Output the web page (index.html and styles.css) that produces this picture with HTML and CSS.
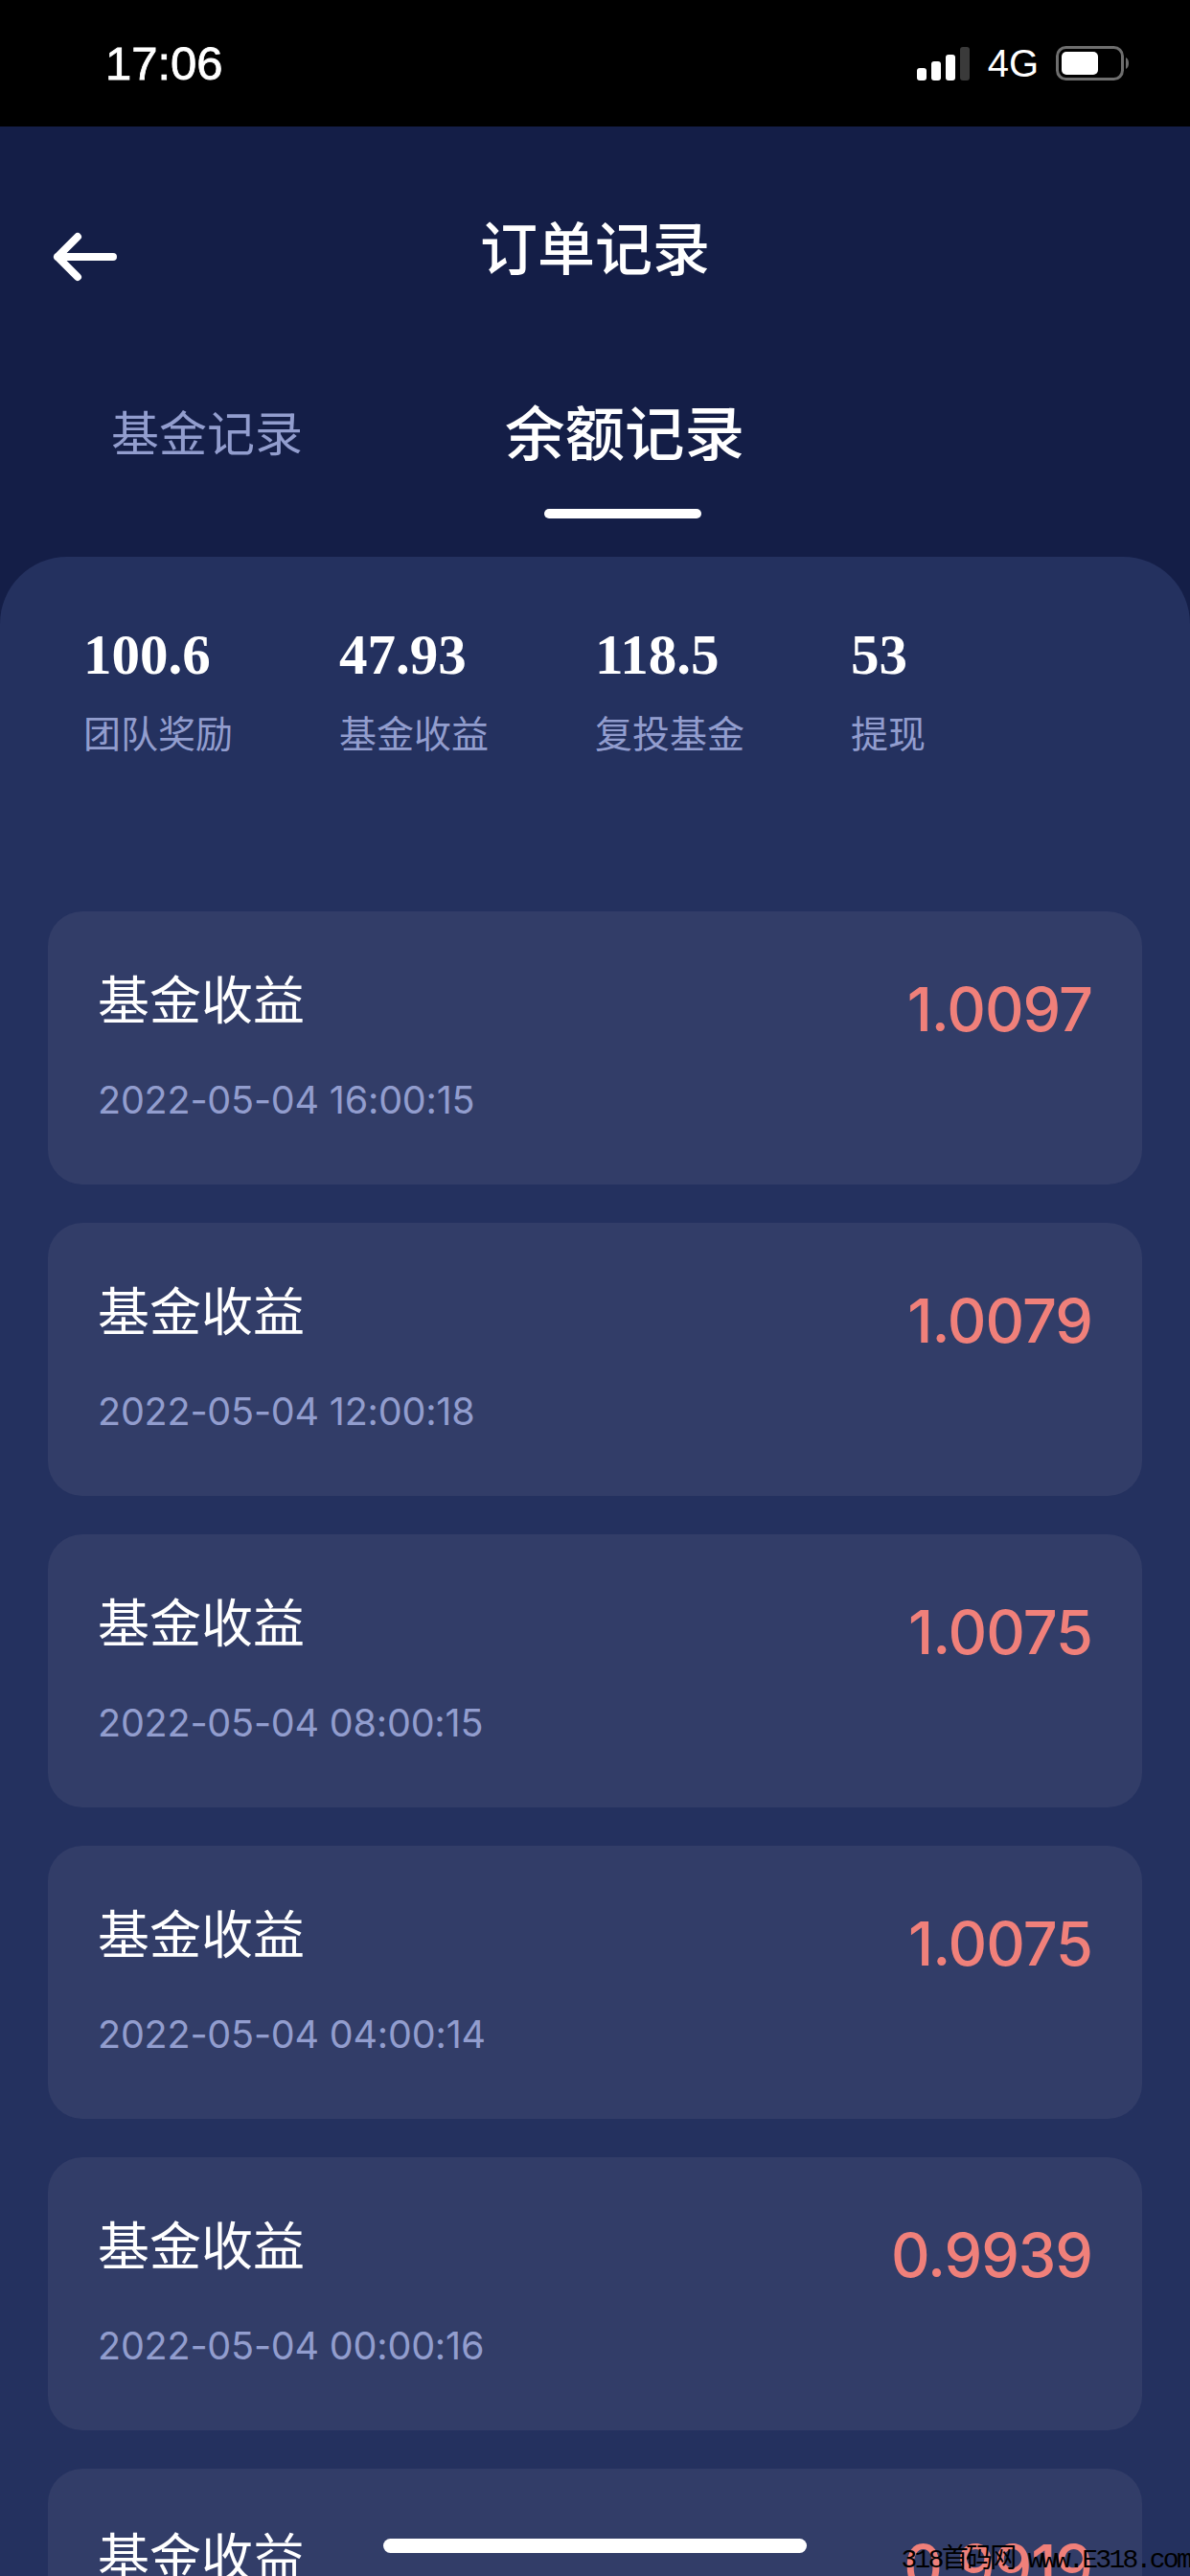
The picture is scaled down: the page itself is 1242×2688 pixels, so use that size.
FILE: index.html
```html
<!DOCTYPE html>
<html lang="en">
<head>
  <title>订单记录</title>
  <meta charset="UTF-8">
  <meta name="viewport" content="width=device-width, initial-scale=1">
  <link rel="stylesheet" href="styles.css">
</head>
<body>
  <div class="status-bar">
    <span class="clock">17:06</span>
    <div class="status-icons">
      <div class="signal">
        <span class="bar bar-1"></span>
        <span class="bar bar-2"></span>
        <span class="bar bar-3"></span>
        <span class="bar bar-4"></span>
      </div>
      <span class="network">4G</span>
      <svg class="battery" width="76" height="36" viewBox="0 0 76 36">
        <rect x="1.5" y="1.5" width="68" height="33" rx="9" fill="none" stroke="#6e6e6e" stroke-width="3"/>
        <rect x="6" y="6" width="38" height="24" rx="5" fill="#fff"/>
        <path d="M73 12 C75 13 76 15 76 18 C76 21 75 23 73 24 Z" fill="#6e6e6e"/>
      </svg>
    </div>
  </div>

  <div class="top-bar">
    <svg class="back" width="74" height="58" viewBox="0 0 74 58">
      <path d="M67 32 H9 M30 11 L9 32 L30 53" fill="none" stroke="#fff" stroke-width="8" stroke-linecap="round" stroke-linejoin="round"/>
    </svg>
    <h1 class="page-title">订单记录</h1>
  </div>

  <div class="tabs">
    <span class="tab">基金记录</span>
    <span class="tab tab-active">余额记录</span>
  </div>

  <div class="panel">
    <div class="stats">
      <div class="stat"><b>100.6</b><span>团队奖励</span></div>
      <div class="stat"><b>47.93</b><span>基金收益</span></div>
      <div class="stat"><b>118.5</b><span>复投基金</span></div>
      <div class="stat"><b>53</b><span>提现</span></div>
    </div>

    <div class="list">
      <div class="card">
        <div class="card-info"><p class="card-title">基金收益</p><p class="card-date">2022-05-04 16:00:15</p></div>
        <span class="card-value">1.0097</span>
      </div>
      <div class="card">
        <div class="card-info"><p class="card-title">基金收益</p><p class="card-date">2022-05-04 12:00:18</p></div>
        <span class="card-value">1.0079</span>
      </div>
      <div class="card">
        <div class="card-info"><p class="card-title">基金收益</p><p class="card-date">2022-05-04 08:00:15</p></div>
        <span class="card-value">1.0075</span>
      </div>
      <div class="card">
        <div class="card-info"><p class="card-title">基金收益</p><p class="card-date">2022-05-04 04:00:14</p></div>
        <span class="card-value">1.0075</span>
      </div>
      <div class="card">
        <div class="card-info"><p class="card-title">基金收益</p><p class="card-date">2022-05-04 00:00:16</p></div>
        <span class="card-value">0.9939</span>
      </div>
      <div class="card">
        <div class="card-info"><p class="card-title">基金收益</p></div>
        <span class="card-value">0.9919</span>
      </div>
    </div>
  </div>

  <div class="home-bar"></div>
  <div class="watermark">318首码网 www.E318.com</div>
</body>
</html>
```

FILE: styles.css
```css
html {
  overflow: hidden;
}

body {
  font-family: "Liberation Sans", "Noto Sans CJK SC", sans-serif;
  background-color: #141e47;
  margin: 0;
  padding: 0;
  color: #fff;
  width: 1242px;
  height: 2688px;
  overflow: hidden;
  position: relative;
}

.status-bar {
  height: 132px;
  background-color: #000;
  display: flex;
  justify-content: space-between;
  align-items: center;
  padding: 0 64px 0 110px;
  box-sizing: border-box;
}

.clock {
  font-size: 49px;
  font-weight: 500;
  -webkit-text-stroke: 0.8px #fff;
}

.status-icons {
  display: flex;
  align-items: center;
}

.signal {
  display: flex;
  align-items: flex-end;
  gap: 5px;
  height: 35px;
}

.bar {
  width: 10px;
  border-radius: 3px;
  background-color: #fff;
}

.bar-1 { height: 13px; }
.bar-2 { height: 20px; }
.bar-3 { height: 27px; }
.bar-4 { height: 35px; background-color: #3a3a3a; }

.network {
  font-size: 40px;
  margin: 0 18px 0 19px;
}

.top-bar {
  height: 174px;
  display: flex;
  justify-content: center;
  position: relative;
}

.back {
  position: absolute;
  left: 51px;
  top: 104px;
}

.page-title {
  font-size: 60px;
  font-weight: 500;
  line-height: 76px;
  margin: 92px 0 0;
}

.tabs {
  height: 275px;
  box-sizing: border-box;
  padding: 86px 0 0 116px;
  display: flex;
  gap: 211px;
}

.tab {
  font-size: 50px;
  color: #929dce;
  line-height: 124px;
  height: 124px;
}

.tab-active {
  font-size: 62.5px;
  font-weight: 500;
  color: #fff;
  position: relative;
}

.tab-active::after {
  content: "";
  position: absolute;
  left: 41px;
  top: 139px;
  width: 164px;
  height: 10px;
  border-radius: 5px;
  background-color: #fff;
}

.panel {
  background-color: #24315f;
  border-radius: 70px 70px 0 0;
  padding: 67px 50px 0;
  height: 2107px;
  box-sizing: border-box;
  overflow: hidden;
}

.stats {
  display: grid;
  grid-template-columns: repeat(4, 267px);
  padding-left: 37px;
  height: 303px;
}

.stat b {
  display: block;
  font-family: "Liberation Serif", serif;
  font-size: 59px;
  line-height: 70px;
}

.stat span {
  display: block;
  font-size: 39px;
  line-height: 54px;
  margin-top: 22px;
  color: #929dce;
}

.list {
  display: flex;
  flex-direction: column;
  gap: 40px;
}

.card {
  height: 285px;
  flex-shrink: 0;
  box-sizing: border-box;
  background-color: #323d68;
  border-radius: 36px;
  padding: 0 52px 0 52px;
  display: flex;
  justify-content: space-between;
}

.card-title {
  font-size: 54px;
  line-height: 72px;
  margin: 58px 0 0;
}

.card-date {
  font-family: Inter, "Liberation Sans", sans-serif;
  font-size: 39.5px;
  letter-spacing: -0.2px;
  line-height: 48px;
  margin: 43px 0 0;
  color: #929dce;
}

.card-value {
  font-family: Inter, "Liberation Sans", sans-serif;
  font-size: 63px;
  font-weight: 500;
  letter-spacing: -1px;
  line-height: 72px;
  margin-top: 66px;
  color: #f0807a;
}

.home-bar {
  position: absolute;
  left: 400px;
  top: 2649px;
  width: 442px;
  height: 15px;
  border-radius: 8px;
  background-color: #fff;
}

.watermark {
  position: absolute;
  right: 0;
  top: 2656px;
  font-family: "Liberation Mono", "Noto Sans CJK SC", monospace;
  font-size: 28px;
  line-height: 32px;
  letter-spacing: -2.7px;
  color: #000;
  white-space: nowrap;
}
```
